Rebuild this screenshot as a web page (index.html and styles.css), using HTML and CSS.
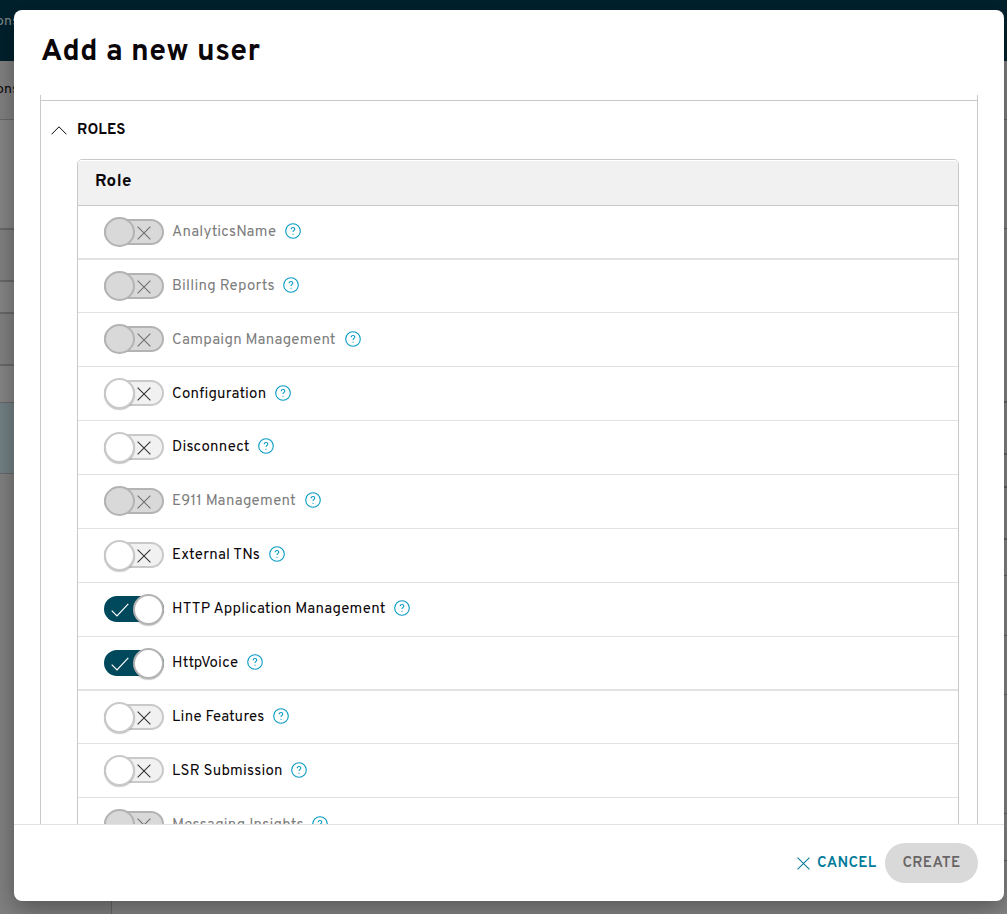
FILE: index.html
```html
<!DOCTYPE html>
<html lang="en">
<head>
<meta charset="utf-8">
<title>Add a new user</title>
<link rel="stylesheet" href="styles.css">
</head>
<body>
<svg class="defs" width="0" height="0">
  <symbol id="cross" viewBox="0 0 14 14"><path d="M.6.6 13.4 13.4M13.4.6.6 13.4"/></symbol>
  <symbol id="check" viewBox="0 0 18 14"><path d="M.7 7.6 6 12.9 17.3.9"/></symbol>
  <symbol id="help" viewBox="0 0 16 16"><circle cx="8" cy="8" r="7.3"/><path d="M6.2 6.2C6.2 5 7 4.5 8 4.5s1.8.6 1.8 1.5c0 1.4-1.8 1.3-1.8 3M8 10.7v1.1"/></symbol>
</svg>
<div class="page">
  <header class="topbar">ons</header>
  <div class="crumbs">ons</div>
  <div class="page-body">
    <div class="side">
      <div class="s1"></div><div class="s2"></div><div class="s3"></div><div class="s4"></div><div class="s5"></div><div class="s6"></div>
      <div class="side-end"></div>
    </div>
    <div class="main">
      <div class="m1"></div><div class="m2"></div><div class="m3"></div><div class="m4"></div><div class="m5"></div><div class="m6"></div><div class="m7"></div><div class="m8"></div><div class="m9"></div><div class="m10"></div>
    </div>
  </div>
</div>
<div class="modal">
  <h1 class="title">Add a new user</h1>
  <div class="scroll">
    <section class="panel">
      <div class="panel-head">
        <svg class="chevron" viewBox="0 0 16 9"><path d="M.6 8.3 8 .8l7.4 7.5"/></svg>
        <h2 class="panel-title">ROLES</h2>
      </div>
      <div class="table">
        <div class="thead">Role</div>
        <div class="row thick disabled"><span class="toggle"><svg class="mark"><use href="#cross"/></svg></span><span class="label l1">AnalyticsName</span><svg class="help"><use href="#help"/></svg></div>
        <div class="row short disabled"><span class="toggle"><svg class="mark"><use href="#cross"/></svg></span><span class="label l2">Billing Reports</span><svg class="help"><use href="#help"/></svg></div>
        <div class="row low disabled"><span class="toggle"><svg class="mark"><use href="#cross"/></svg></span><span class="label l3">Campaign Management</span><svg class="help"><use href="#help"/></svg></div>
        <div class="row low"><span class="toggle"><svg class="mark"><use href="#cross"/></svg></span><span class="label l4">Configuration</span><svg class="help"><use href="#help"/></svg></div>
        <div class="row"><span class="toggle"><svg class="mark"><use href="#cross"/></svg></span><span class="label l5">Disconnect</span><svg class="help"><use href="#help"/></svg></div>
        <div class="row disabled"><span class="toggle"><svg class="mark"><use href="#cross"/></svg></span><span class="label l6">E911 Management</span><svg class="help"><use href="#help"/></svg></div>
        <div class="row"><span class="toggle"><svg class="mark"><use href="#cross"/></svg></span><span class="label l7">External TNs</span><svg class="help"><use href="#help"/></svg></div>
        <div class="row"><span class="toggle on"><svg class="mark"><use href="#check"/></svg></span><span class="label l8">HTTP Application Management</span><svg class="help"><use href="#help"/></svg></div>
        <div class="row thick"><span class="toggle on"><svg class="mark"><use href="#check"/></svg></span><span class="label l9">HttpVoice</span><svg class="help"><use href="#help"/></svg></div>
        <div class="row short"><span class="toggle"><svg class="mark"><use href="#cross"/></svg></span><span class="label l10">Line Features</span><svg class="help"><use href="#help"/></svg></div>
        <div class="row low"><span class="toggle"><svg class="mark"><use href="#cross"/></svg></span><span class="label l11">LSR Submission</span><svg class="help"><use href="#help"/></svg></div>
        <div class="row low disabled"><span class="toggle"><svg class="mark"><use href="#cross"/></svg></span><span class="label l12">Messaging Insights</span><svg class="help"><use href="#help"/></svg></div>
      </div>
    </section>
  </div>
  <footer class="footer">
    <button class="cancel"><svg class="cancel-icon"><use href="#cross"/></svg><span>CANCEL</span></button>
    <button class="create">CREATE</button>
  </footer>
</div>
</body>
</html>
```
FILE: styles.css
```css
*, *::before { box-sizing: border-box; }
body { margin: 0; height: 914px; overflow: hidden; position: relative; font-family: Overpass, Roboto, "Liberation Sans", sans-serif; color: #0b0609; }
svg { display: block; fill: none; stroke: currentColor; }
.defs { position: absolute; }
.page { height: 914px; display: flex; flex-direction: column; background: #858585; }
.topbar { height: 61px; background: #00212d; color: #84898b; font-size: 14px; line-height: 16px; padding-top: 14px; text-indent: -4px; letter-spacing: .3px; }
.crumbs { height: 59px; background: #808080; border-bottom: 1px solid #686868; font-size: 14px; line-height: 16px; padding-top: 21px; text-indent: -4px; letter-spacing: .3px; }
.page-body { flex: 1; display: flex; }
.side { width: 112px; display: flex; flex-direction: column; border-right: 1px solid #686868; }
.side > div { flex: none; border-bottom: 2px solid #686868; }
.s1 { height: 110px; background: #858585; }
.s2 { height: 52px; background: #808080; }
.s3 { height: 32px; background: #858585; }
.s4 { height: 52px; background: #808080; }
.side .s5 { height: 37px; background: #858585; border-bottom: 1px solid #686868; }
.side .s6 { height: 71px; background: #728085; border-bottom: 1px solid #686868; }
.side .side-end { flex: 1; border: 0; background: #808080; }
.main { flex: 1; }
.main > div { border-bottom: 1px solid #606060; }
.m1 { height: 109px; }
.m2 { height: 174px; }
.m3 { height: 52px; }
.m4 { height: 33px; }
.m5 { height: 52px; }
.m6 { height: 36px; }
.m7 { height: 60px; }
.m8 { height: 59px; }
.m9 { height: 119px; }
.m10 { height: 47px; }
.main .m2, .main .m3, .main .m4, .main .m5 { border-bottom-width: 2px; }

.modal { position: absolute; left: 14px; top: 10px; width: 990px; height: 891px; background: #fff; border-radius: 8px; box-shadow: 0 8px 24px rgba(0,0,0,.34); display: flex; flex-direction: column; overflow: visible; }
.title { margin: 0; height: 85px; padding: 25px 0 0 27px; font-size: 30px; line-height: 36px; font-weight: 700; letter-spacing: .42px; }
.scroll { height: 729px; overflow: hidden; padding: 0 26px; }
.panel { border: solid #c9c9c9; border-width: 0 1px; padding-top: 5px; }
.panel-head { border-top: 1px solid #c9c9c9; height: 59px; display: flex; align-items: flex-start; padding-left: 10px; }
.chevron { width: 16px; height: 9px; margin-top: 25px; stroke-width: 1; }
.panel-title { margin: 20px 0 0 10px; font-size: 15px; line-height: 20px; font-weight: 700; letter-spacing: .1px; }
.table { margin: 0 18px 0 36px; border: 1px solid #c9c9c9; border-radius: 5px 5px 0 0; }
.thead { height: 46px; border-bottom: 1px solid #c9c9c9; border-top: 1px solid #fff; border-radius: 4px 4px 0 0; background: #f1f1f1; padding: 11px 17px 0; font-size: 17px; line-height: 20px; font-weight: 700; letter-spacing: .4px; }
.row { height: 54px; border-bottom: 1px solid #e2e2e2; display: flex; align-items: flex-start; padding: 11px 0 0 26px; }
.thick { border-bottom-width: 2px; }
.short { height: 53px; }
.toggle { width: 60px; height: 26px; margin-top: 2px; border: 2px solid #c9c9c9; border-radius: 13px; background: #f1f1f1; display: flex; align-items: center; justify-content: space-between; padding-right: 11px; flex: none; }
.toggle::before { content: ""; flex: none; width: 31px; height: 31px; margin-left: -2px; border: 2px solid #c9c9c9; border-radius: 50%; background: #fff; box-shadow: 0 1px 1px rgba(0,0,0,.22); }
.mark { width: 14px; height: 14px; margin-top: 1px; color: #333; stroke-width: 1.1; flex: none; }
.disabled .toggle { background: #d9d9d9; border-color: #b3b3b3; }
.disabled .toggle::before { background: #d9d9d9; border-color: #b3b3b3; height: 30px; box-shadow: none; }
.disabled .mark { color: #707070; }
.toggle.on { flex-direction: row-reverse; background: #00485c; border-color: #00485c; padding: 0 0 0 5px; }
.toggle.on::before { margin: 0 -2px 0 0; border-color: #b3b3b3; }
.toggle.on .mark { width: 18px; color: #fff; stroke-width: 1.2; }
.label { margin: 6px 0 0 8px; flex: none; font-size: 15px; line-height: 20px; letter-spacing: .22px; white-space: nowrap; }
.disabled .label { color: #7d7d7d; }
.help { width: 16px; height: 16px; margin: 5.5px 0 0 8.5px; color: #079bc4; stroke-width: 1.1; flex: none; }
.low .label { margin-top: 7px; }
.low .help { margin-top: 6.5px; }
.l1 { width: 104px; }
.l2 { width: 102px; }
.l3 { width: 164px; }
.l4 { width: 94px; }
.l5 { width: 77px; }
.l6 { width: 124px; }
.l7 { width: 88px; }
.l8 { width: 213px; }
.l9 { width: 66px; }
.l10 { width: 92px; }
.l11 { width: 110px; }
.l12 { width: 131px; }

.footer { flex: 1; border-top: 1px solid #e2e2e2; display: flex; justify-content: flex-end; align-items: flex-start; padding: 18px 26px 0 0; }
button { border: 0; background: none; font: 600 15px/20px Overpass, Roboto, "Liberation Sans", sans-serif; letter-spacing: .35px; padding: 2px 0 0; height: 40px; }
.cancel { display: flex; align-items: center; color: #007a99; margin-right: 9px; }
.cancel span { width: 59px; text-align: left; white-space: nowrap; }
.cancel-icon { width: 13px; height: 13px; margin: -1px 7px 0 0; stroke-width: 1.1; }
.create { width: 93px; border-radius: 20px; background: #d9d9d9; color: #696566; }
```
